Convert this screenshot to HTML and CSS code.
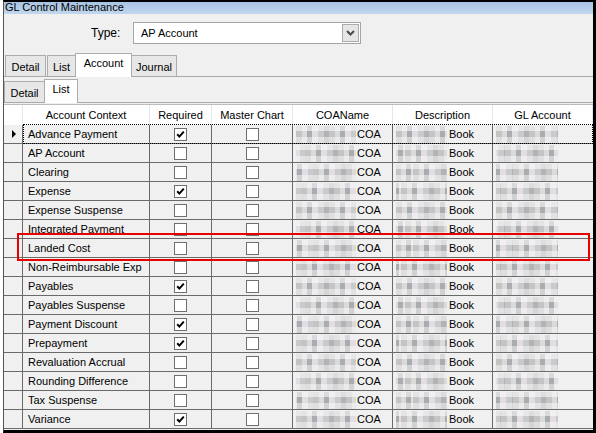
FILE: index.html
```html
<!DOCTYPE html>
<html>
<head>
<meta charset="utf-8">
<link rel="stylesheet" href="styles.css">
</head>
<body>
<div class="window">
  <div class="titlebar">GL Control Maintenance</div>
  <div class="typerow">
    <span class="typelabel">Type:</span>
    <div class="combo">
      <span class="combotext">AP Account</span>
      <span class="dropbtn"><svg width="9" height="6" viewBox="0 0 9 6"><path d="M1 1 L4.5 4.5 L8 1" fill="none" stroke="#4a4a4a" stroke-width="2"/></svg></span>
    </div>
  </div>
  <div class="tabs tabs1">
    <div class="tab w41">Detail</div>
    <div class="tab w29">List</div>
    <div class="tab sel w57">Account</div>
    <div class="tab w46">Journal</div>
  </div>
  <div class="panel1">
    <div class="tabs tabs2">
      <div class="tab w41">Detail</div>
      <div class="tab sel w33">List</div>
    </div>
    <div class="panel2">
      <div class="grid">
        <div class="hd rh"></div>
        <div class="hd">Account Context</div>
        <div class="hd">Required</div>
        <div class="hd">Master Chart</div>
        <div class="hd">COAName</div>
        <div class="hd">Description</div>
        <div class="hd">GL Account</div>
      </div>
      <div class="grid rows" id="rows"></div>
    </div>
  </div>
  <div class="highlight"></div>
</div>
<script src="app.js"></script>
</body>
</html>
```
FILE: app.js
```js
var data = [
  ["Advance Payment", 1],
  ["AP Account", 0],
  ["Clearing", 0],
  ["Expense", 1],
  ["Expense Suspense", 0],
  ["Integrated Payment", 0],
  ["Landed Cost", 0],
  ["Non-Reimbursable Exp", 0],
  ["Payables", 1],
  ["Payables Suspense", 0],
  ["Payment Discount", 1],
  ["Prepayment", 1],
  ["Revaluation Accrual", 0],
  ["Rounding Difference", 0],
  ["Tax Suspense", 0],
  ["Variance", 1]
];
var tick = '<svg width="11" height="11" viewBox="0 0 11 11"><path d="M2.2 5.2 L4.4 7.6 L8.8 2.6" fill="none" stroke="#000" stroke-width="2"/></svg>';
var html = "";
data.forEach(function (r, i) {
  var v = "v" + (i % 4);
  html += '<div class="c rh">' + (i === 0 ? '<span class="arrow"></span>' : '') + '</div>';
  html += '<div class="c txt">' + r[0] + '</div>';
  html += '<div class="c ctr"><span class="cb">' + (r[1] ? tick : '') + '</span></div>';
  html += '<div class="c ctr"><span class="cb"></span></div>';
  html += '<div class="c txt"><span class="blur b60 ' + v + '"></span>COA</div>';
  html += '<div class="c txt"><span class="blur b51 ' + v + '"></span>Book</div>';
  html += '<div class="c txt"><span class="blur b62 ' + v + '"></span></div>';
});
html += '<div class="focus"></div>';
document.getElementById("rows").innerHTML = html;
```
FILE: styles.css
```css
html, body {
  margin: 0;
  padding: 0;
  background: #fff;
}
body {
  width: 596px;
  height: 433px;
  overflow: hidden;
  font-family: "Liberation Sans", Arial, sans-serif;
  font-size: 11px;
  color: #000;
}
.window {
  position: relative;
  margin-left: 3px;
  width: 593px;
  height: 433px;
  box-sizing: border-box;
  border-top: 2px solid #000;
  border-left: 1px solid #555;
  border-right: 3px solid #000;
  border-bottom: 3px solid #000;
  background: #f0f0f0;
  display: flex;
  flex-direction: column;
}
.titlebar {
  height: 12px;
  line-height: 11px;
  padding-left: 1px;
  background: linear-gradient(#a8c4e4, #c2d7ee);
  font-size: 11px;
  white-space: nowrap;
}
.typerow {
  margin-top: 8px;
  height: 22px;
  display: flex;
  align-items: center;
}
.typelabel {
  width: 30px;
  margin-left: 87px;
  margin-right: 12px;
  font-size: 12px;
}
.combo {
  width: 228px;
  height: 22px;
  box-sizing: border-box;
  border: 1px solid #a5a5a5;
  background: #fff;
  display: flex;
  align-items: center;
  justify-content: space-between;
  padding: 0 1px 0 7px;
}
.combotext {
  font-size: 11px;
}
.dropbtn {
  width: 17px;
  height: 18px;
  box-sizing: border-box;
  border: 1px solid #acacac;
  background: #e6e6e6;
  display: flex;
  align-items: center;
  justify-content: center;
}
.tabs {
  display: flex;
  align-items: flex-end;
  position: relative;
  z-index: 1;
}
.tabs1 {
  margin-top: 9px;
  height: 23px;
  padding-left: 1px;
}
.tabs2 {
  margin-top: 2px;
  height: 23px;
}
.tab {
  height: 21px;
  box-sizing: border-box;
  border: 1px solid #adadad;
  border-bottom: none;
  margin-right: 1px;
  background: #e7e7e7;
  display: flex;
  align-items: center;
  justify-content: center;
  font-size: 11px;
  padding-top: 1px;
}
.tab.sel {
  height: 24px;
  background: #fff;
  margin-left: -2px;
  margin-right: -1px;
  margin-bottom: -1px;
  align-items: flex-start;
  padding-top: 3px;
}
.w41 { width: 41px; }
.w29 { width: 29px; }
.w57 { width: 57px; }
.w46 { width: 46px; }
.w33 { width: 34px; }
.panel1 {
  flex: 1;
  border-top: 1px solid #a9a9a9;
  display: flex;
  flex-direction: column;
  min-height: 0;
}
.panel2 {
  flex: 1;
  border-top: 1px solid #a9a9a9;
  display: flex;
  flex-direction: column;
  min-height: 0;
  padding-top: 1px;
}
.grid {
  display: grid;
  grid-template-columns: 19px 127px 62px 81px 100px 100px 100px;
  border-top: 1px solid #bcbcbc;
}
.hd {
  height: 20px;
  box-sizing: border-box;
  background: #fff;
  border-right: 1px solid #dfe8f5;
  display: flex;
  align-items: center;
  justify-content: center;
  font-size: 11px;
  white-space: nowrap;
}
.rows {
  position: relative;
  border-top: none;
}
.c {
  height: 19px;
  box-sizing: border-box;
  border-right: 1px solid #6a6a6a;
  border-bottom: 1px solid #6a6a6a;
  background: #f0f0f0;
  display: flex;
  align-items: center;
  white-space: nowrap;
  font-size: 11px;
  overflow: hidden;
}
.c:nth-child(7n) {
  border-right: none;
}
.c.rh {
  justify-content: center;
}
.txt {
  padding-left: 5px;
}
.ctr {
  justify-content: center;
}
.cb {
  width: 13px;
  height: 13px;
  box-sizing: border-box;
  border: 1px solid #6f6f6f;
  background: #fff;
  display: flex;
  align-items: center;
  justify-content: center;
}
.arrow {
  width: 0;
  height: 0;
  border-top: 4px solid transparent;
  border-bottom: 4px solid transparent;
  border-left: 4px solid #000;
  margin-left: 1px;
}
.blur {
  height: 17px;
  margin-left: -2px;
  flex: none;
  background-image:
    linear-gradient(180deg, rgba(255,255,255,0.55) 0 5px, rgba(255,255,255,0) 5px 11px, rgba(255,255,255,0.45) 11px 17px),
    repeating-linear-gradient(90deg, #c4c4c4 0 6px, #dadada 6px 11px, #a9adb0 11px 16px, #e2dde2 16px 22px, #c8cacc 22px 28px, #b4b2b6 28px 33px);
}
.v1 { background-position: 0 0, 9px 0; }
.v2 { background-position: 0 0, 17px 0; }
.v3 { background-position: 0 0, 5px 0; }
.b60 { width: 60px; margin-right: 1px; }
.b51 { width: 51px; margin-right: 2px; }
.b62 { width: 62px; }
.focus {
  position: absolute;
  left: 19px;
  top: -1px;
  right: 0;
  height: 20px;
  box-sizing: border-box;
  border: 1px dotted #000;
  pointer-events: none;
}
.highlight {
  position: absolute;
  left: 13px;
  top: 231px;
  width: 573px;
  height: 28px;
  box-sizing: border-box;
  border: 2px solid #e60000;
}
```
